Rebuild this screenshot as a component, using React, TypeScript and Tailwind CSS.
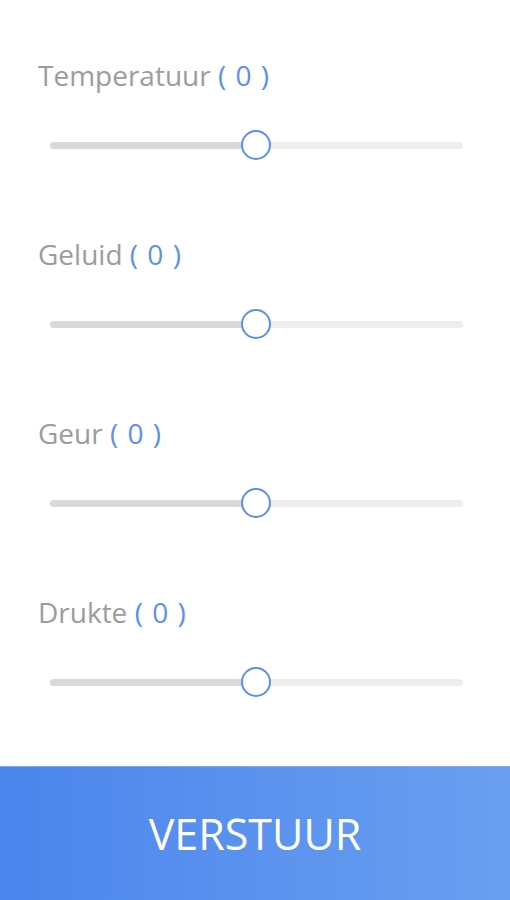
import React from "react";

const items = ["Temperatuur", "Geluid", "Geur", "Drukte"];

function Slider() {
  return (
    <div className="relative h-[32px] ml-[50px] mr-[47px] flex items-center">
      <div className="h-[7px] w-full rounded-full bg-[#eeeeee]" />
      <div className="absolute left-0 h-[7px] w-[206px] rounded-l-full bg-[#d9d9d9]" />
      <div className="absolute left-[191px] top-[1px] h-[30px] w-[30px] rounded-full border-2 border-[#5a8ef0] bg-white" />
    </div>
  );
}

export default function App() {
  return (
    <div
      className="w-[510px] h-[900px] bg-white flex flex-col"
      style={{ fontFamily: '"Open Sans", sans-serif' }}
    >
      <div className="h-[766px] shrink-0 overflow-hidden pt-[57px]">
        {items.map((name) => (
          <div key={name} className="h-[179px]">
            <div className="pl-[38px] text-[28px] leading-[36px] text-[#9c9c9c]">
              {name} <span className="text-[#5b8ff0] tracking-[1px]">( 0 )</span>
            </div>
            <div className="mt-[36px]">
              <Slider />
            </div>
          </div>
        ))}
      </div>
      <div className="h-[134px] shrink-0 border-t border-[#7fa8f2] bg-gradient-to-r from-[#4a85ec] to-[#6a9ff0] flex items-center justify-center">
        <span className="text-white text-[43px] leading-none">VERSTUUR</span>
      </div>
    </div>
  );
}
